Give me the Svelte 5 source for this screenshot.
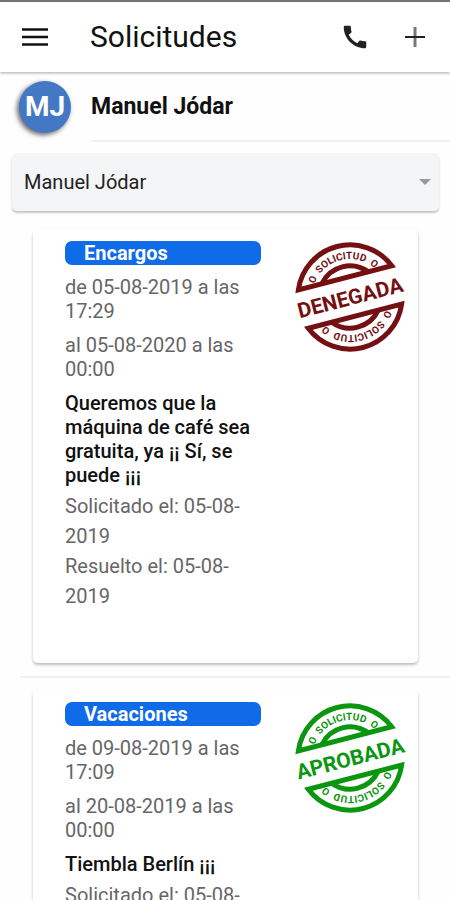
<script lang="ts">
  type Solicitud = {
    tipo: string;
    desde: string;
    hasta: string;
    motivo: string;
    fechas: string[];
    estado: "denegada" | "aprobada";
  };

  const usuario = "Manuel Jódar";

  let seleccionado = $state(usuario);

  const solicitudes: Solicitud[] = [
    {
      tipo: "Encargos",
      desde: "de 05-08-2019 a las 17:29",
      hasta: "al 05-08-2020 a las 00:00",
      motivo: "Queremos que la máquina de café sea gratuita, ya ¡¡ Sí, se puede ¡¡¡",
      fechas: ["Solicitado el: 05-08-2019", "Resuelto el: 05-08-2019"],
      estado: "denegada",
    },
    {
      tipo: "Vacaciones",
      desde: "de 09-08-2019 a las 17:09",
      hasta: "al 20-08-2019 a las 00:00",
      motivo: "Tiembla Berlín ¡¡¡",
      fechas: ["Solicitado el: 05-08-2019"],
      estado: "aprobada",
    },
  ];
</script>

{#snippet half(id: string)}
  <path class="line" d="M-48.2 -19.8A52.1 52.1 0 0 1 48.2 -19.8Z" />
  <path class="line" d="M-24 -19.8A31.1 31.1 0 0 1 24 -19.8" />
  <path {id} fill="none" d="M-38 0A38 38 0 0 1 38 0" />
  <text class="ring">
    <textPath href="#{id}" startOffset="22%">O</textPath>
  </text>
  <text class="ring">
    <textPath href="#{id}" startOffset="50%">SOLICITUD</textPath>
  </text>
  <text class="ring">
    <textPath href="#{id}" startOffset="78%">O</textPath>
  </text>
{/snippet}

<div class="page">
  <header class="toolbar">
    <button class="icon" aria-label="Menú">
      <svg width="26" height="18" viewBox="0 0 26 18">
        <path d="M0 1.5h26M0 9h26M0 16.5h26" stroke="#111" stroke-width="2.6" />
      </svg>
    </button>
    <h1>Solicitudes</h1>
    <button class="icon" aria-label="Llamar">
      <svg width="30" height="30" viewBox="0 0 24 24">
        <path
          fill="#222"
          d="M20.01 15.38c-1.23 0-2.42-.2-3.53-.56-.35-.12-.74-.03-1.01.24l-1.57 1.97c-2.83-1.35-5.48-3.9-6.89-6.83l1.95-1.66c.27-.28.35-.67.24-1.02-.37-1.11-.56-2.3-.56-3.53 0-.54-.45-.99-.99-.99H4.19C3.65 3 3 3.24 3 3.99 3 13.28 10.73 21 20.01 21c.71 0 .99-.63.99-1.18v-3.45c0-.54-.45-.99-.99-.99z"
        />
      </svg>
    </button>
    <button class="icon" aria-label="Añadir">
      <svg width="20" height="20" viewBox="0 0 20 20">
        <path d="M10 0v20" stroke="#777" stroke-width="3" />
        <path d="M0 10h20" stroke="#222" stroke-width="2" />
      </svg>
    </button>
  </header>

  <main>
    <div class="user">
      <div class="avatar">MJ</div>
      <h2>{usuario}</h2>
    </div>

    <div class="picker">
      <select aria-label="Usuario" bind:value={seleccionado}>
        <option>{usuario}</option>
      </select>
      <svg class="arrow" width="12" height="6" viewBox="0 0 12 6">
        <path d="M0 0h12L6 6z" fill="#999" />
      </svg>
    </div>

    <ul class="list">
      {#each solicitudes as s, i}
        <li>
          <article class="card">
            <div class="info">
              <h3>{s.tipo}</h3>
              <p>{s.desde}</p>
              <p>{s.hasta}</p>
              <p class="reason">{s.motivo}</p>
              {#each s.fechas as fecha}
                <p class="date">{fecha}</p>
              {/each}
            </div>

            <svg class="stamp {s.estado}" viewBox="-56 -56 112 112">
              <g transform="rotate(-14.5)">
                {@render half(`arco-${i}-a`)}
                <g transform="rotate(180)">
                  {@render half(`arco-${i}-b`)}
                </g>
                <text class="word" y="8">{s.estado.toUpperCase()}</text>
              </g>
            </svg>
          </article>
        </li>
      {/each}
    </ul>
  </main>
</div>

<style>
  :global(body) {
    margin: 0;
    background: #fefefe;
  }

  .page {
    display: flex;
    flex-direction: column;
    height: 100vh;
    box-sizing: border-box;
    border-top: 2px solid #777;
    color: #111;
    font-family: Roboto, "Liberation Sans", sans-serif;
    font-size: 20px;
    line-height: 24px;
  }

  h1,
  h2,
  h3,
  p,
  ul {
    margin: 0;
    padding: 0;
  }

  .toolbar {
    display: flex;
    align-items: center;
    flex: none;
    height: 70px;
    padding: 0 15px;
    background: #fff;
    box-shadow: 0 1px 3px rgba(0, 0, 0, 0.35);
    z-index: 1;
  }

  .icon {
    display: flex;
    align-items: center;
    justify-content: center;
    width: 40px;
    height: 40px;
    padding: 0;
    border: 0;
    background: none;
    cursor: pointer;
  }

  .icon:last-child {
    margin-left: 20px;
  }

  h1 {
    flex: 1;
    margin-left: 35px;
    font-size: 30px;
    font-weight: 400;
    line-height: 32px;
  }

  main {
    flex: 1;
    min-height: 0;
    overflow-y: auto;
    scrollbar-width: none;
  }

  .user {
    display: flex;
    align-items: center;
    padding-left: 19px;
  }

  .avatar {
    width: 52px;
    height: 52px;
    border-radius: 50%;
    background: #4379c4;
    box-shadow: -2px 2px 5px rgba(0, 0, 0, 0.6);
    color: #fff;
    font-size: 28px;
    font-weight: 700;
    line-height: 52px;
    text-align: center;
  }

  h2 {
    flex: 1;
    margin-left: 20px;
    padding-top: 2px;
    border-bottom: 2px solid #f1f1f1;
    font-size: 23px;
    font-weight: 700;
    line-height: 66px;
  }

  .picker {
    position: relative;
    margin: 11px 11px 0 12px;
  }

  select {
    display: block;
    width: 100%;
    height: 58px;
    padding: 0 32px 0 12px;
    border: 0;
    border-radius: 5px;
    appearance: none;
    background: #f4f5f7;
    box-shadow: 0 2px 2px rgba(0, 0, 0, 0.22);
    color: #222;
    font: inherit;
  }

  .arrow {
    position: absolute;
    top: 26px;
    right: 8px;
    pointer-events: none;
  }

  .list {
    padding: 18px 0 0 20px;
    list-style: none;
  }

  li + li {
    margin-top: 13px;
    padding-top: 12px;
    border-top: 2px solid #f1f1f1;
  }

  .card {
    display: flex;
    align-items: flex-start;
    justify-content: space-between;
    margin: 0 32px 0 13px;
    padding: 12px 12px 52px 32px;
    border-radius: 5px;
    background: #fff;
    box-shadow: 0 2px 3px rgba(0, 0, 0, 0.25);
  }

  .info {
    width: 196px;
  }

  h3 {
    padding-left: 19px;
    border-radius: 7px;
    background: #0f6be8;
    color: #fff;
    font-size: 20px;
    font-weight: 700;
    line-height: 24px;
  }

  p {
    margin-top: 10px;
    color: #666;
  }

  .reason {
    margin-bottom: 4px;
    color: #111;
    font-weight: 500;
  }

  .date {
    margin-top: 0;
    line-height: 30px;
  }

  .stamp {
    width: 112px;
    height: 112px;
    overflow: visible;
  }

  .denegada {
    color: #740f12;
  }

  .aprobada {
    color: #0a960e;
  }

  .line {
    fill: none;
    stroke: currentColor;
    stroke-width: 5;
  }

  .ring,
  .word {
    fill: currentColor;
    font-weight: 700;
    text-anchor: middle;
  }

  .ring {
    font-size: 10px;
  }

  .word {
    font-size: 21px;
  }
</style>
